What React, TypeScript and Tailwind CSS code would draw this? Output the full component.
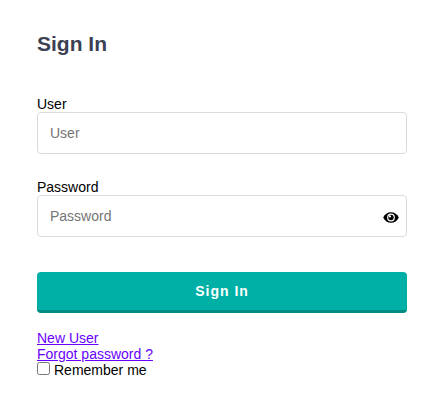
import type { ReactNode } from "react";

type FieldProps = { id: string; label: string; type: string; children?: ReactNode };

function EyeIcon() {
  return (
    <svg viewBox="0 0 16 11" className="h-[11px] w-4" aria-hidden="true">
      <path
        d="M0.2 5.5C1.7 2.2 4.6 0.2 8 0.2s6.3 2 7.8 5.3C14.3 8.8 11.4 10.8 8 10.8S1.7 8.8 0.2 5.5Z"
        fill="#000"
      />
      <circle cx="8" cy="5.5" r="3.9" fill="#fff" />
      <circle cx="8" cy="5.5" r="2.7" fill="#000" />
      <circle cx="6.9" cy="4.4" r="1.1" fill="#fff" />
    </svg>
  );
}

function Field({ id, label, type, children }: FieldProps) {
  return (
    <div className="flex flex-col">
      <label htmlFor={id} className="h-4 leading-4">
        {label}
      </label>
      <div className="relative flex">
        <input
          id={id}
          type={type}
          placeholder={label}
          className="h-[42px] w-full rounded-[4px] border border-[#dbdbdb] bg-white px-3 text-sm outline-none placeholder:text-[#757575]"
        />
        {children}
      </div>
    </div>
  );
}

export default function App() {
  return (
    <main className="h-[407px] w-[440px] bg-white pt-8 pr-[33px] pl-[37px] font-['Liberation_Sans',Arial,sans-serif] text-sm text-black">
      <h1 className="mb-10 h-6 text-[21px] leading-6 font-bold text-[#3b4053]">Sign In</h1>
      <form>
        <div className="flex flex-col gap-[25px]">
          <Field id="user" label="User" type="text" />
          <Field id="password" label="Password" type="password">
            <button type="button" aria-label="Show password" className="absolute top-[17px] right-2 flex">
              <EyeIcon />
            </button>
          </Field>
        </div>
        <button
          type="submit"
          className="mt-[35px] h-[41px] w-full rounded-[4px] border-b-[3px] border-[#008c82] bg-[#00b0a6] text-sm font-bold tracking-[1px] text-white"
        >
          Sign In
        </button>
        <div className="mt-[17px] flex flex-col items-start leading-4">
          <a href="#" className="text-[#6a00ff] underline">
            New User
          </a>
          <a href="#" className="text-[#6a00ff] underline">
            Forgot password ?
          </a>
          <label className="flex gap-1">
            <input type="checkbox" className="h-[13px] w-[13px]" />
            <span>Remember me</span>
          </label>
        </div>
      </form>
    </main>
  );
}
